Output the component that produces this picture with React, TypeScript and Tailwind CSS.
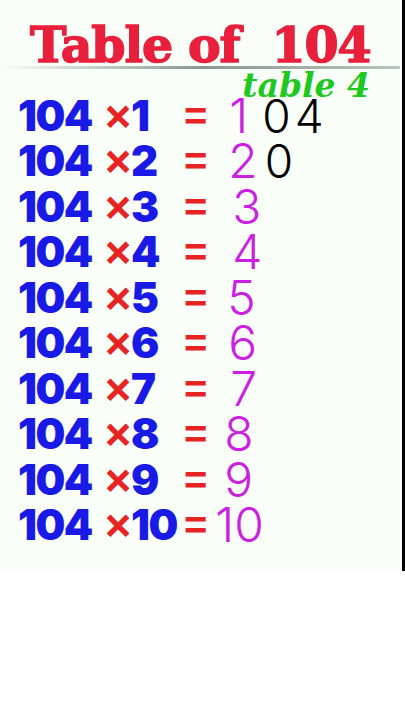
const rows = [
  { m: "1", res: "1", resCls: "ml-[22px]", extra: "04", extraCls: "ml-[14px]" },
  { m: "2", res: "2", resCls: "ml-[21px]", extra: "0", extraCls: "ml-[7px]" },
  { m: "3", res: "3", resCls: "ml-[25px]", extra: "", extraCls: "" },
  { m: "4", res: "4", resCls: "ml-[25px]", extra: "", extraCls: "" },
  { m: "5", res: "5", resCls: "ml-[20px]", extra: "", extraCls: "" },
  { m: "6", res: "6", resCls: "ml-[21px]", extra: "", extraCls: "" },
  { m: "7", res: "7", resCls: "ml-[23px]", extra: "", extraCls: "" },
  { m: "8", res: "8", resCls: "ml-[17px]", extra: "", extraCls: "" },
  { m: "9", res: "9", resCls: "ml-[17px]", extra: "", extraCls: "" },
  { m: "10", res: "10", resCls: "ml-[8px]", extra: "", extraCls: "" },
]

function Row({ m, res, resCls, extra, extraCls }: (typeof rows)[number]) {
  return (
    <div className="flex h-[45.5px] items-center leading-[36px]">
      <span className="w-[85px] font-['Inter'] text-[42px] font-black tracking-[-1.5px] text-[#1a1ae6]">
        104
      </span>
      <span className="w-[28px] font-['DejaVu_Sans'] text-[36px] font-bold text-[#e82323] [-webkit-text-stroke:1px_#e82323]">
        ×
      </span>
      <span className="w-[53px] font-['Inter'] text-[42px] font-black tracking-[-1.5px] text-[#1a1ae6]">
        {m}
      </span>
      <span className="font-['Liberation_Sans'] text-[40px] font-bold text-[#e82323]">
        =
      </span>
      <span
        className={`${resCls} font-['Inter'] text-[48px] font-light text-[#cc1fe3]`}
      >
        {res}
      </span>
      {extra && (
        <span
          className={`${extraCls} font-['Inter'] text-[46px] font-light tracking-[4px] text-black`}
        >
          {extra}
        </span>
      )}
    </div>
  )
}

export default function App() {
  return (
    <div className="min-h-[720px] bg-white">
      <div className="h-[571px] border-r-[3px] border-black bg-[#f9fef9]">
        <div className="pt-[24px] pl-[30px] font-['DejaVu_Serif'] text-[49px] leading-[42px] font-bold tracking-[-1.1px] whitespace-pre text-[#e8203c] [-webkit-text-stroke:1.5px_#e8203c]">
          Table of  104
        </div>
        <div className="h-[3px] w-[400px] rounded-full bg-gradient-to-r from-transparent via-[#8a9890] to-[#b8c4bc]" />
        <div className="mt-[2px] pr-[32px] text-right font-['DejaVu_Serif'] text-[33px] leading-[30px] font-bold italic text-[#1ec81e]">
          table 4
        </div>
        <div className="-mt-[8px] pl-[18px]">
          {rows.map((r) => (
            <Row key={r.m} {...r} />
          ))}
        </div>
      </div>
    </div>
  )
}
